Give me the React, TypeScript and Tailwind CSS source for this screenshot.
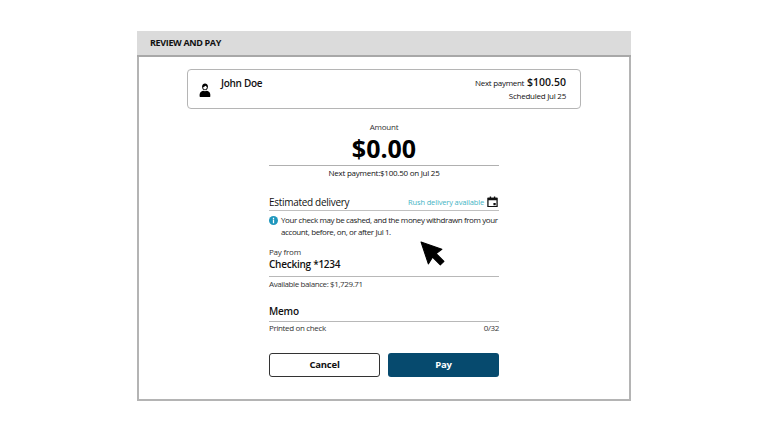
export default function App() {
  return (
    <div className="relative h-[432px] w-[768px] overflow-hidden bg-white pt-[31px] pl-[137px] font-['Open_Sans',sans-serif] text-[#111]">
      <div className="flex h-[370px] w-[494px] flex-col">
        {/* Header */}
        <div className="flex h-[26px] items-center border-b-2 border-[#a8a8a8] bg-[#dbdbdb] pl-[13px] text-[9px] font-bold tracking-[-0.35px]">
          REVIEW AND PAY
        </div>

        <div className="flex flex-1 flex-col items-center border-x-2 border-b-2 border-[#b4b4b4] pt-[12px]">
          {/* Payee card */}
          <div className="flex h-[40px] w-[394px] justify-between rounded-[4px] border border-[#b5b5b5] pr-[14px] pl-[11px]">
            <div className="flex">
              <svg viewBox="0 0 14 18" className="mt-[12px] h-[15px] w-[12px]">
                <path d="M3.500 5.500C3.500.5 10.500.5 10.500 5.500 10.500 9 8.800 10 7 10S3.500 9 3.500 5.500Z" fill="#000" />
                <path d="M4.800 6.200C6 5.800 7 5.200 7.800 4.500 8.200 5.300 8.700 5.800 9.300 6 9.200 7.800 8.200 8.900 7 8.900S4.900 7.800 4.800 6.200Z" fill="#fff" />
                <path d="M.8 18C-.2 14 1.500 11 5 10.500 6 11.200 8 11.200 9 10.500 12.500 11 14.200 14 13.200 18Z" fill="#000" />
              </svg>
              <span className="mt-[6px] ml-[10px] text-[10px] leading-[15px] font-semibold tracking-[-0.3px]">John Doe</span>
            </div>
            <div className="flex flex-col items-end pt-[4px]">
              <div className="flex items-baseline gap-[3px] leading-[16px]">
                <span className="text-[8px] tracking-[-0.3px]">Next payment</span>
                <span className="text-[10.5px] font-semibold">$100.50</span>
              </div>
              <span className="text-[8px] leading-[9px] tracking-[-0.25px]">Scheduled Jul 25</span>
            </div>
          </div>

          {/* Form column */}
          <div className="flex w-[230px] flex-col">
            <div className="mt-[14px] text-center text-[8px] leading-[8px] tracking-[-0.2px] text-[#333]">Amount</div>
            <div className="text-center text-[25px] leading-[34px] font-bold text-black">$0.00</div>
            <div className="border-t border-[#b0b0b0] pt-[1px] text-center text-[8px] leading-[12px] tracking-[-0.25px]">
              Next payment:$100.50 on Jul 25
            </div>

            <div className="mt-[14px] flex h-[18px] items-center justify-between border-b border-[#c0c0c0] pt-[2px]">
              <span className="text-[10px] tracking-[-0.3px]">Estimated delivery</span>
              <div className="flex items-center gap-[3px] pr-[1px]">
                <span className="text-[7.5px] tracking-[-0.15px] text-[#45b4c4]">Rush delivery available</span>
                <svg viewBox="0 0 12 12" className="mb-[2px] h-[11px] w-[11px]">
                  <path d="M1 2.500h10v9H1z" fill="none" stroke="#111" strokeWidth="1.400" />
                  <path d="M1 1.800h10v2.700H1zM3 .5h1.500v2H3zM7.500.5H9v2H7.500zM7 7.500h2.500v2.500H7z" fill="#111" />
                </svg>
              </div>
            </div>

            <div className="mt-[3px] flex gap-[3px]">
              <svg viewBox="0 0 10 10" className="mt-[2px] h-[9px] w-[9px] shrink-0">
                <circle cx="5" cy="5" r="5" fill="#1f97bd" />
                <path d="M4.300 2h1.400v1.300H4.300zM4.300 4h1.400v4H4.300z" fill="#fff" />
              </svg>
              <p className="text-[8px] leading-[12px] tracking-[-0.4px] text-[#222]">
                Your check may be cashed, and the money withdrawn from your account, before, on, or after Jul 1.
              </p>
            </div>

            <div className="mt-[8px] text-[8px] leading-[11px] tracking-[-0.2px] text-[#333]">Pay from</div>
            <div className="border-b border-[#b8b8b8] pb-[4px] text-[10px] leading-[15px] font-semibold tracking-[-0.25px]">Checking *1234</div>
            <div className="mt-[1px] text-[8px] leading-[12px] tracking-[-0.4px] text-[#333]">Available balance: $1,729.71</div>

            <div className="mt-[14px] border-b border-[#b8b8b8] pb-[2px] text-[10px] leading-[15px] font-semibold tracking-[-0.2px]">Memo</div>
            <div className="flex justify-between text-[8px] leading-[12px] tracking-[-0.35px] text-[#333]">
              <span>Printed on check</span>
              <span>0/32</span>
            </div>

            <div className="mt-[19px] flex gap-[8px]">
              <button className="h-[24px] w-[111px] rounded-[3px] border border-[#333] bg-white text-[9.5px] font-bold tracking-[-0.2px] text-[#111]">
                Cancel
              </button>
              <button className="h-[24px] flex-1 rounded-[3px] bg-[#064a6e] text-[9.5px] font-bold tracking-[-0.2px] text-white">Pay</button>
            </div>
          </div>
        </div>
      </div>

      {/* Mouse pointer */}
      <svg viewBox="0 0 24 24" className="absolute top-[241px] left-[420px] h-[25px] w-[25px]">
        <path d="M1 1L21 8 15.500 12 23 19.500 19.500 23 12 15.500 8 22Z" fill="#000" stroke="#000" strokeLinejoin="round" />
      </svg>
    </div>
  );
}
